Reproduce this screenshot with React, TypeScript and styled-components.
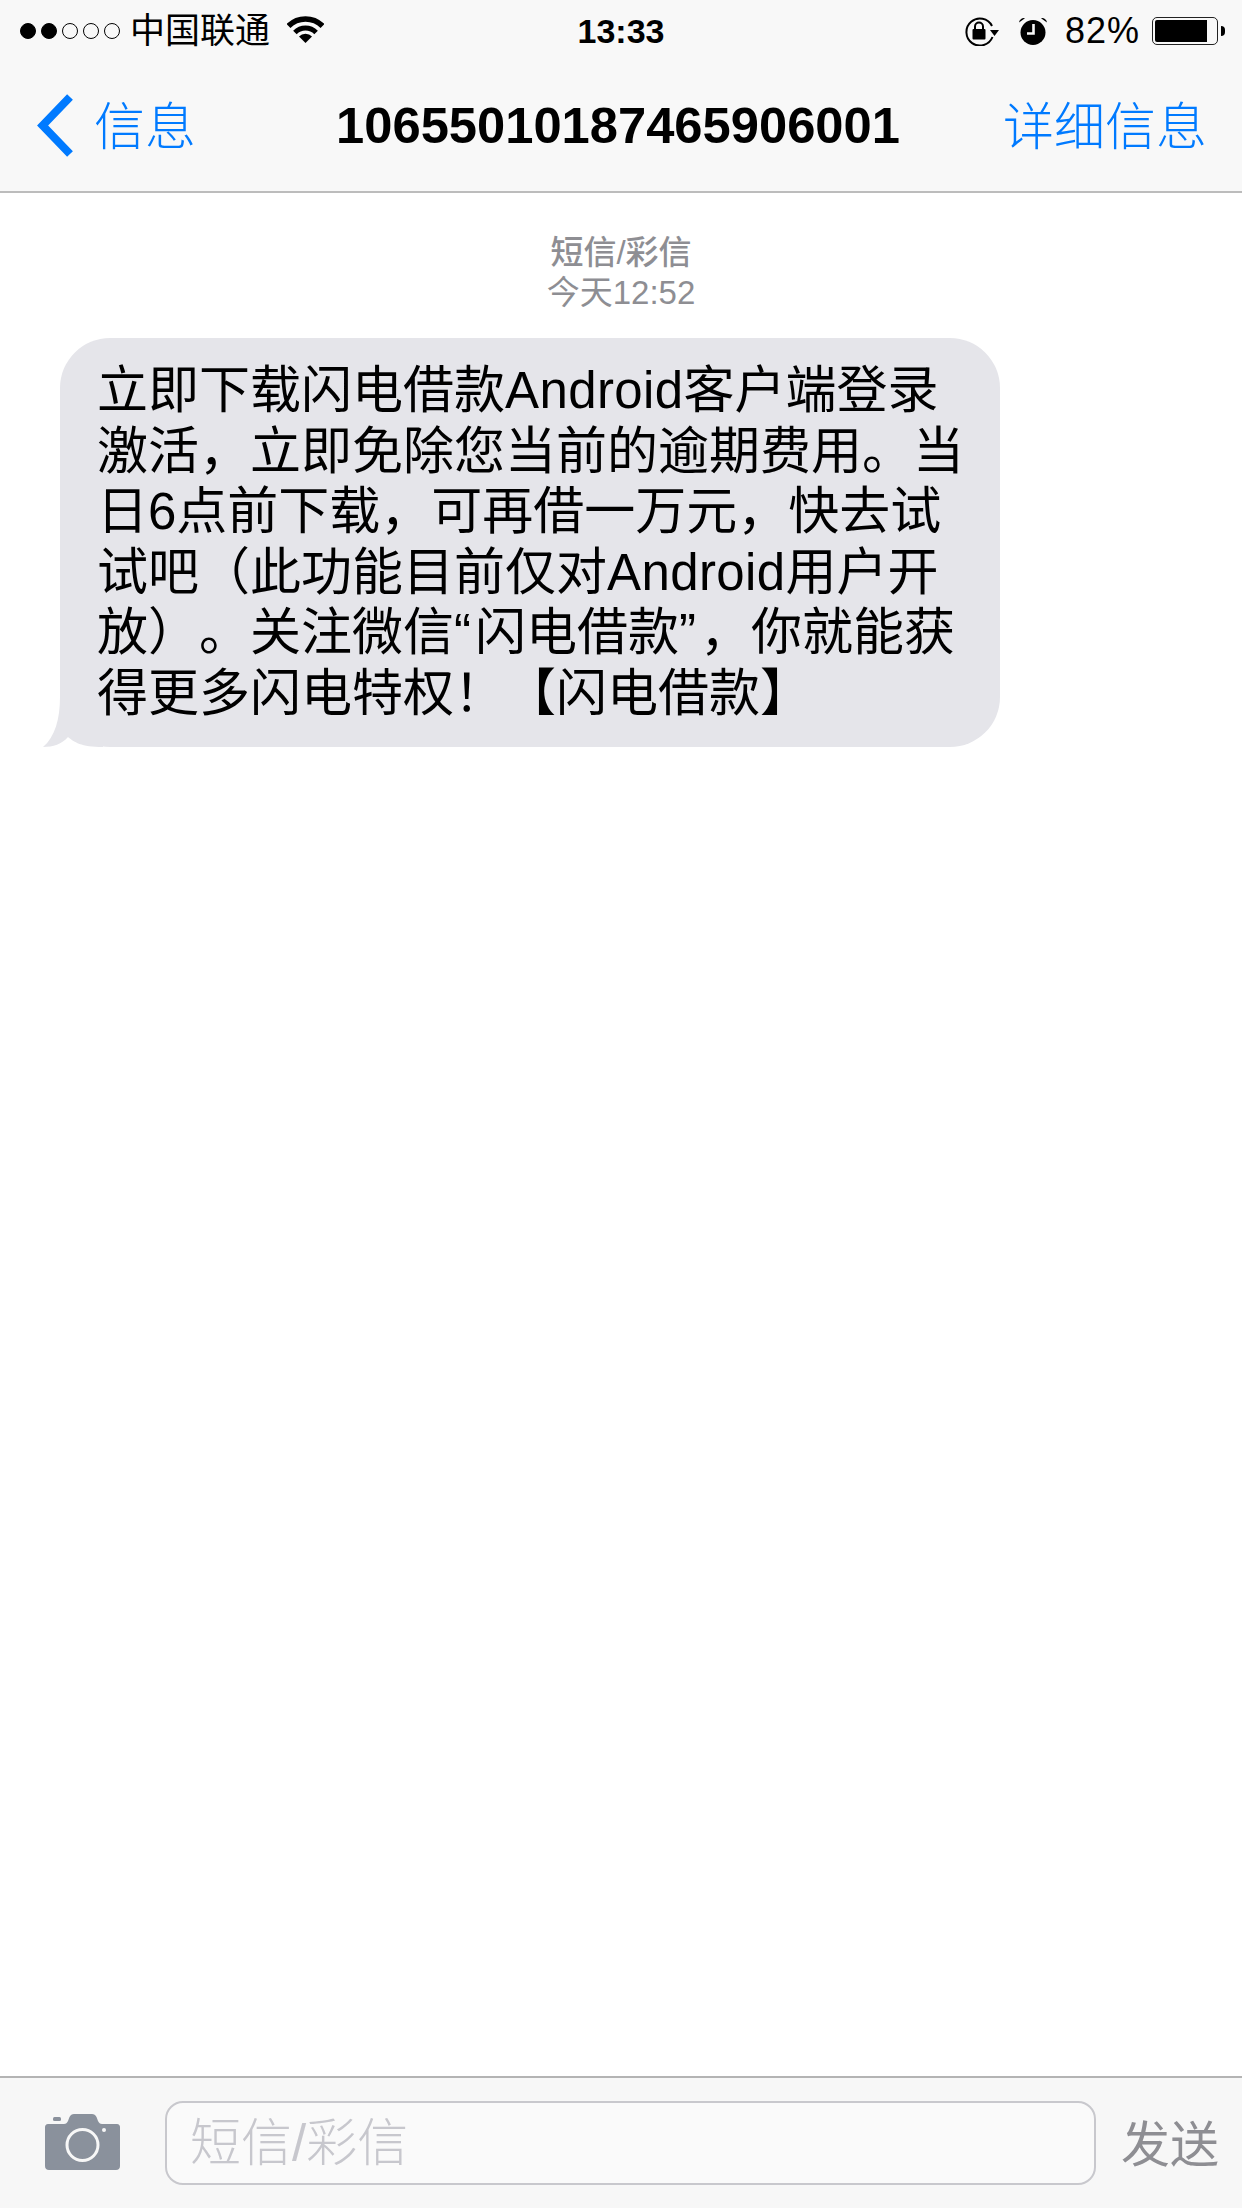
import styled, { createGlobalStyle } from "styled-components";

const FONT = `"Liberation Sans", "Noto Sans CJK SC", sans-serif`;
const BLUE = "#007aff";
const GRAY = "#8e8e93";

const Global = createGlobalStyle`
    html, body {
        margin: 0;
        padding: 0;
        background: #fff;
    }
`;
const Page = styled.div`
    width: 1242px;
    height: 2208px;
    display: flex;
    flex-direction: column;
    font-family: ${FONT};
    font-weight: 300;
    color: #000;
    overflow: hidden;
    text-spacing-trim: space-all;
`;
const Header = styled.header`
    background: #f8f8f8;
    border-bottom: 2px solid #bcbcbc;
    height: 193px;
    box-sizing: border-box;
`;
const StatusBar = styled.div`
    height: 62px;
    display: grid;
    grid-template-columns: 1fr auto 1fr;
    align-items: center;
`;
const StatusLeft = styled.div`
    display: flex;
    align-items: center;
    padding-left: 20px;
`;
const Dots = styled.div`
    display: flex;
    gap: 5px;
`;
const Dot = styled.span<{ $on?: boolean }>`
    width: 16px;
    height: 16px;
    box-sizing: border-box;
    border-radius: 50%;
    border: 1.5px solid #000;
    background: ${props => (props.$on ? "#000" : "transparent")};
`;
const Carrier = styled.span`
    font-size: 35px;
    font-weight: 400;
    line-height: 40px;
    margin-left: 10px;
`;
const Wifi = styled.svg`
    width: 37px;
    height: 27px;
    margin-left: 17px;
    margin-top: -3px;
`;
const Clock = styled.span`
    font-size: 34px;
    font-weight: 700;
    line-height: 40px;
`;
const StatusRight = styled.div`
    display: flex;
    align-items: center;
    justify-content: flex-end;
    padding-right: 24px;
`;
const LockIcon = styled.svg`
    width: 35px;
    height: 30px;
`;
const AlarmIcon = styled.svg`
    width: 30px;
    height: 28px;
    margin-left: 19px;
`;
const Percent = styled.span`
    font-size: 36px;
    font-weight: 400;
    line-height: 40px;
    margin-left: 17px;
    letter-spacing: 1px;
`;
const Battery = styled.div`
    width: 66px;
    height: 28px;
    margin-left: 12px;
    box-sizing: border-box;
    border: 1.5px solid #222;
    border-radius: 5px;
    padding: 2px;
    position: relative;
    &::after {
        content: "";
        position: absolute;
        right: -8px;
        top: 8px;
        width: 4px;
        height: 10px;
        background: #000;
        border-radius: 0 4px 4px 0;
    }
`;
const BatteryFill = styled.div`
    height: 100%;
    background: #000;
    border-radius: 2px 0 0 2px;
`;
const NavBar = styled.div`
    height: 129px;
    display: grid;
    grid-template-columns: 1fr auto 1fr;
    align-items: center;
    padding-bottom: 2px;
    box-sizing: border-box;
`;
const BackLink = styled.div`
    display: flex;
    align-items: center;
    padding-left: 37px;
    font-size: 51px;
    color: ${BLUE};
`;
const BackLabel = styled.span`
    margin-top: -5px;
`;
const Chevron = styled.svg`
    width: 38px;
    height: 63px;
    margin-right: 19px;
`;
const Title = styled.div`
    font-size: 50.7px;
    font-weight: 700;
    padding-right: 6px;
`;
const DetailLink = styled.div`
    text-align: right;
    padding: 0 35px 5px 0;
    font-size: 51px;
    color: ${BLUE};
`;
const Thread = styled.main`
    flex: 1;
    padding-top: 40px;
`;
const Stamp = styled.div<{ $strong?: boolean }>`
    text-align: center;
    font-size: 33px;
    line-height: 40px;
    color: ${GRAY};
    font-weight: ${props => (props.$strong ? 500 : 400)};
`;
const Bubble = styled.div`
    position: relative;
    width: 940px;
    height: 409px;
    box-sizing: border-box;
    margin: 25px 0 0 60px;
    padding: 23px 0 0 37px;
    background: #e5e5ea;
    border-radius: 50px;
    font-size: 51px;
    font-weight: 400;
    line-height: 60.6px;
`;
const Tail = styled.svg`
    position: absolute;
    left: -17px;
    bottom: 0;
    width: 60px;
    height: 50px;
`;
const Line = styled.div`
    white-space: nowrap;
`;
const Latin = styled.span`
    letter-spacing: 0.4px;
`;
const Quote = styled.span`
    letter-spacing: 4px;
`;
const InputBar = styled.footer`
    height: 132px;
    box-sizing: border-box;
    border-top: 2px solid #b4b4b4;
    background: #f7f7f7;
    display: flex;
    align-items: center;
    padding-left: 45px;
`;
const Camera = styled.svg`
    width: 75px;
    height: 56px;
    margin-top: -2px;
`;
const TextBox = styled.input`
    width: 931px;
    height: 84px;
    box-sizing: border-box;
    margin-left: 45px;
    padding: 0 0 0 23px;
    border: 2px solid #c8c8cd;
    border-radius: 18px;
    background: #fafafa;
    font-family: ${FONT};
    font-weight: 300;
    font-size: 51px;
    outline: none;
    &::placeholder {
        color: #c7c7cd;
        opacity: 1;
    }
`;
const Send = styled.div`
    margin: -5px 0 0 25px;
    font-size: 49px;
    color: ${GRAY};
    font-weight: 400;
`;

const App = () => {
    return (<Page>
        <Global />
        <Header>
            <StatusBar>
                <StatusLeft>
                    <Dots>
                        <Dot $on /><Dot $on /><Dot /><Dot /><Dot />
                    </Dots>
                    <Carrier>中国联通</Carrier>
                    <Wifi viewBox="0 0 37 27">
                        <path d="M1.5 10 A24 24 0 0 1 35.5 10" fill="none" stroke="#000" strokeWidth="5.5" />
                        <path d="M7.9 16.4 A15 15 0 0 1 29.1 16.4" fill="none" stroke="#000" strokeWidth="5" />
                        <path d="M18.5 27 L12 20.5 A9 9 0 0 1 25 20.5 Z" fill="#000" />
                    </Wifi>
                </StatusLeft>
                <Clock>13:33</Clock>
                <StatusRight>
                    <LockIcon viewBox="0 0 35 30">
                        <path d="M28.5 21 A13.5 13.5 0 1 1 28 10" fill="none" stroke="#000" strokeWidth="2" />
                        <path d="M26 14 L35 14 L30.5 20 Z" fill="#000" />
                        <rect x="8.5" y="13" width="13" height="10.5" rx="1" fill="#000" />
                        <path d="M11 13 V10.5 A4 4 0 0 1 19 10.5 V13" fill="none" stroke="#000" strokeWidth="2" />
                    </LockIcon>
                    <AlarmIcon viewBox="0 0 30 28">
                        <circle cx="15" cy="15.5" r="12.5" fill="#000" />
                        <path d="M1 5.5 A5 5 0 0 1 7 1.2 Z M29 5.5 A5 5 0 0 0 23 1.2 Z" fill="#000" />
                        <path d="M15.5 7 V16.5 H9" fill="none" stroke="#f8f8f8" strokeWidth="2.6" />
                    </AlarmIcon>
                    <Percent>82%</Percent>
                    <Battery>
                        <BatteryFill style={{ width: "87%" }} />
                    </Battery>
                </StatusRight>
            </StatusBar>
            <NavBar>
                <BackLink>
                    <Chevron viewBox="0 0 38 63">
                        <polyline points="33,3 5.6,31.5 33,60" fill="none" stroke={BLUE} strokeWidth="8" />
                    </Chevron>
                    <BackLabel>信息</BackLabel>
                </BackLink>
                <Title>10655010187465906001</Title>
                <DetailLink>详细信息</DetailLink>
            </NavBar>
        </Header>
        <Thread>
            <Stamp $strong>短信/彩信</Stamp>
            <Stamp>今天12:52</Stamp>
            <Bubble>
                <Tail viewBox="0 0 60 50">
                    <path d="M17 0 C17 22 12 40 0 50 C10 50 19 47 25 40 C31 45 38 50 60 50 L60 0 Z" fill="#e5e5ea" />
                </Tail>
                <Line>立即下载闪电借款<Latin>Android</Latin>客户端登录</Line>
                <Line>激活，立即免除您当前的逾期费用。当</Line>
                <Line>日6点前下载，可再借一万元，快去试</Line>
                <Line>试吧（此功能目前仅对<Latin>Android</Latin>用户开</Line>
                <Line>放）。关注微信<Quote>“</Quote>闪电借款<Quote>”</Quote>，你就能获</Line>
                <Line>得更多闪电特权！【闪电借款】</Line>
            </Bubble>
        </Thread>
        <InputBar>
            <Camera viewBox="0 0 75 56">
                <path d="M3 10 H19 C21 10 22 9 23 7 L24.5 3 C25.5 1 27 0 29 0 H47 C49 0 50.5 1 51.5 3 L53 7 C54 9 55 10 57 10 H72 C74 10 75 11.5 75 13 V52 C75 54.5 73.5 56 71 56 H4 C1.5 56 0 54.5 0 52 V13 C0 11.5 1 10 3 10 Z" fill="#8a919c" />
                <rect x="8" y="3" width="8" height="4" rx="1.5" fill="#8a919c" />
                <circle cx="37.5" cy="31" r="15.5" fill="none" stroke="#f7f7f7" strokeWidth="3" />
                <circle cx="59" cy="16" r="2" fill="#f7f7f7" />
            </Camera>
            <TextBox placeholder="短信/彩信" readOnly />
            <Send>发送</Send>
        </InputBar>
    </Page>);
};
export default App;
